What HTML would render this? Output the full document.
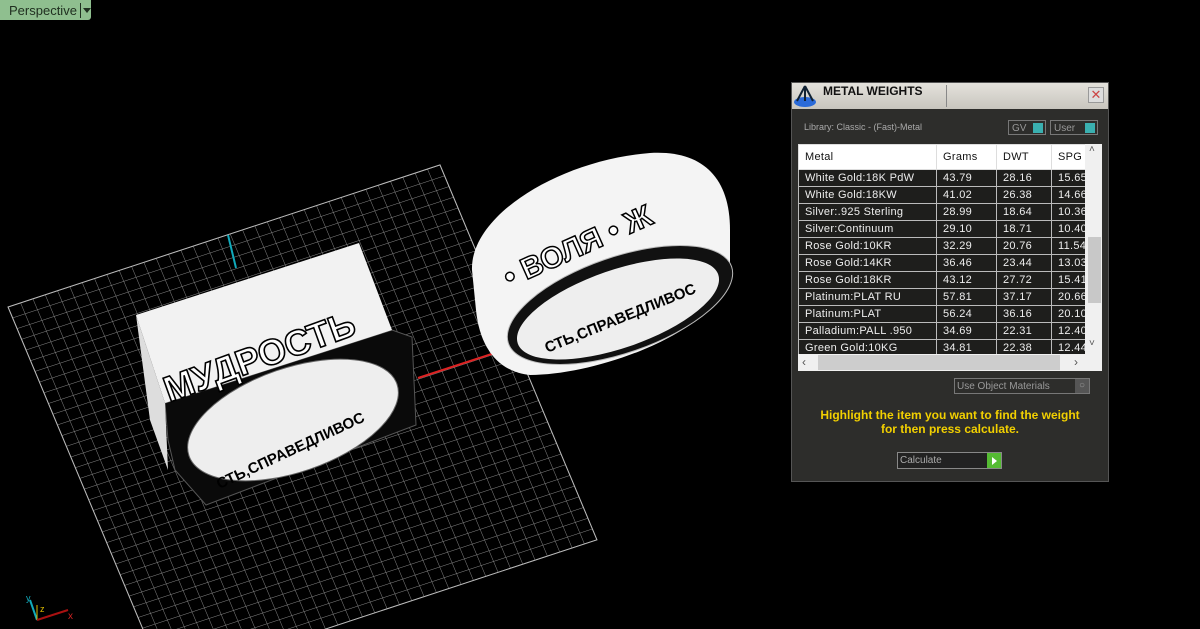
<!DOCTYPE html>
<html style="overflow:hidden"><head><meta charset="utf-8"><style>
html,body{margin:0;width:1200px;height:629px;overflow:hidden}
body{background:#000;position:relative;font-family:"Liberation Sans",sans-serif}
.vp{position:absolute;left:0;top:0;width:91px;height:20px;background:#8fbf8f;border-bottom-right-radius:3px}
.vp span{position:absolute;left:9px;top:3px;font-size:13px;color:#203020}
.vp i{position:absolute;left:80px;top:3px;width:1px;height:15px;background:#203020}
.vp b{position:absolute;left:83px;top:8px;border:4px solid transparent;border-top:5px solid #203020;border-bottom:0}
.pn{position:absolute;left:791px;top:82px;width:316px;height:398px;background:#2d2d2b;border:1px solid #555}
.tb{position:absolute;left:0;top:0;width:316px;height:26px;background:linear-gradient(#e4e2dc,#c8c5be);}
.tb .t{position:absolute;left:31px;top:1px;font-weight:bold;font-size:12px;color:#111}
.tb .sep{position:absolute;left:154px;top:2px;width:1px;height:22px;background:#888}
.tb .x{position:absolute;right:4px;top:4px;width:14px;height:14px;border:1px solid #999;background:#ddd;color:#c44;font-size:13px;line-height:13px;text-align:center}
.lib{position:absolute;left:12px;top:39px;font-size:9px;color:#aaa}
.tg{position:absolute;top:37px;height:15px;border:1px solid #777;font-size:10px;color:#999;line-height:15px;padding-left:3px;box-sizing:border-box}
.tg i{position:absolute;right:2px;top:2px;width:10px;height:10px;background:#3ab0b0}
.tbl{position:absolute;left:6px;top:61px;width:304px;height:227px;background:#fff;overflow:hidden}
table{position:absolute;left:0;top:0;border-collapse:collapse;font-size:11px;letter-spacing:.3px}
td{height:16px;padding:0 0 0 6px;border:1px solid #bbb;color:#eee;background:#1e1e1c;white-space:nowrap;overflow:hidden}
tr.h td{height:24px;background:#fff;color:#111;border-color:#ddd}
.vs{position:absolute;right:0;top:0;width:17px;height:210px;background:#f0f0f0}
.hs{position:absolute;left:0;top:210px;width:304px;height:17px;background:#f0f0f0}
.y{position:absolute;left:0;width:316px;text-align:center;color:#f2d000;font-weight:bold;font-size:12px}
</style></head><body>
<svg width="1200" height="629" style="position:absolute;left:0;top:0">
<defs><pattern id="g" width="13.7" height="13.7" patternUnits="userSpaceOnUse"><path d="M0 0H13.7M0 0V13.7" stroke="#8a8a8a" stroke-width="1" vector-effect="non-scaling-stroke" fill="none"/></pattern></defs>
<g transform="matrix(0.9,-0.296,0.327,0.781,8,307)">
<rect width="480" height="480" fill="url(#g)"/>
<rect width="480" height="480" fill="none" stroke="#bbb" vector-effect="non-scaling-stroke"/>
</g>
<line x1="228" y1="235" x2="236" y2="268" stroke="#1ab" stroke-width="2"/>
<line x1="418" y1="378" x2="504" y2="350" stroke="#d22" stroke-width="2"/>
<!-- right ring -->
<path d="M472,270 C470,215 560,160 650,153 C700,150 730,175 730,230 L730,275 C720,330 600,375 530,375 C500,372 480,350 476,310 Z" fill="#f4f4f4"/>
<ellipse cx="620" cy="305" rx="118" ry="48" transform="rotate(-19 620 305)" fill="#111" stroke="#bbb"/>
<ellipse cx="618" cy="309" rx="106" ry="39" transform="rotate(-19 618 309)" fill="#eee"/>
<text x="490" y="262" font-size="30" font-weight="bold" fill="#fff" stroke="#000" stroke-width="1.5" transform="rotate(-24 560 230)" font-family="Liberation Sans,DejaVu Sans,sans-serif">• ВОЛЯ • Ж</text>
<text x="535" y="330" font-size="15" font-weight="bold" fill="#000" transform="rotate(-22 600 310)" font-family="Liberation Sans,DejaVu Sans,sans-serif">СТЬ,СПРАВЕДЛИВОС</text>
<!-- left ring -->
<path d="M165,403 L392,330 L412,337 L416,425 L206,505 L175,470 L168,440 Z" fill="#0a0a0a" stroke="#555"/>
<path d="M136,315 L359,243 L392,330 L165,403 Z" fill="#f2f2f2"/>
<path d="M136,315 L165,403 L168,470 L150,420 Z" fill="#ddd"/>
<ellipse cx="293" cy="420" rx="110" ry="52" transform="rotate(-19 293 420)" fill="#eee" stroke="#666"/>
<text x="150" y="367" font-size="36" font-weight="bold" fill="#fff" stroke="#000" stroke-width="1.6" transform="rotate(-20 260 330)" font-family="Liberation Sans,DejaVu Sans,sans-serif">МУДРОСТЬ</text>
<text x="200" y="458" font-size="15" font-weight="bold" fill="#000" transform="rotate(-25 280 430)" font-family="Liberation Sans,DejaVu Sans,sans-serif">СТЬ,СПРАВЕДЛИВОС</text>
<!-- axis -->
<line x1="37" y1="620" x2="30" y2="600" stroke="#1ab" stroke-width="2"/>
<line x1="37" y1="620" x2="37" y2="605" stroke="#db0" stroke-width="1"/>
<line x1="37" y1="620" x2="68" y2="610" stroke="#a11" stroke-width="2"/>
<text x="40" y="612" font-size="9" fill="#db0">z</text>
<text x="68" y="619" font-size="10" fill="#c22">x</text>
<text x="26" y="601" font-size="9" fill="#1ab">y</text>
</svg>
<div class="vp"><span>Perspective</span><i></i><b></b></div>
<div class="pn">
 <div class="tb"><svg width="28" height="26" style="position:absolute;left:0;top:0"><ellipse cx="13" cy="19" rx="11" ry="5" fill="#2a6ad8"/><path d="M13 3 L5 18 M13 3 L21 18 M13 3 V18" stroke="#123" stroke-width="2"/></svg><span class="t">METAL WEIGHTS</span><span class="sep"></span><div class="x">✕</div></div>
 <div class="lib">Library: Classic - (Fast)-Metal</div>
 <div class="tg" style="left:216px;width:38px">GV<i></i></div>
 <div class="tg" style="left:258px;width:48px">User<i></i></div>
 <div class="tbl">
  <table>
   <tr class="h"><td style="width:131px">Metal</td><td style="width:53px">Grams</td><td style="width:48px">DWT</td><td style="width:31px">SPG</td></tr>
   <tr><td>White Gold:18K PdW</td><td>43.79</td><td>28.16</td><td>15.65</td></tr>
   <tr><td>White Gold:18KW</td><td>41.02</td><td>26.38</td><td>14.66</td></tr>
   <tr><td>Silver:.925 Sterling</td><td>28.99</td><td>18.64</td><td>10.36</td></tr>
   <tr><td>Silver:Continuum</td><td>29.10</td><td>18.71</td><td>10.40</td></tr>
   <tr><td>Rose Gold:10KR</td><td>32.29</td><td>20.76</td><td>11.54</td></tr>
   <tr><td>Rose Gold:14KR</td><td>36.46</td><td>23.44</td><td>13.03</td></tr>
   <tr><td>Rose Gold:18KR</td><td>43.12</td><td>27.72</td><td>15.41</td></tr>
   <tr><td>Platinum:PLAT RU</td><td>57.81</td><td>37.17</td><td>20.66</td></tr>
   <tr><td>Platinum:PLAT</td><td>56.24</td><td>36.16</td><td>20.10</td></tr>
   <tr><td>Palladium:PALL .950</td><td>34.69</td><td>22.31</td><td>12.40</td></tr>
   <tr><td>Green Gold:10KG</td><td>34.81</td><td>22.38</td><td>12.44</td></tr>
  </table>
  <div class="vs"><div style="position:absolute;left:3px;top:93px;width:13px;height:66px;background:#c8c8c8"></div><span style="position:absolute;left:4px;top:0;font-size:10px;color:#555">˄</span><span style="position:absolute;left:4px;top:194px;font-size:10px;color:#555">˅</span></div>
  <div class="hs"><div style="position:absolute;left:20px;top:1px;width:242px;height:15px;background:#cdcdcd"></div><span style="position:absolute;left:4px;top:1px;font-size:12px;color:#555">‹</span><span style="position:absolute;left:276px;top:1px;font-size:12px;color:#555">›</span></div>
 </div>
 <div style="position:absolute;left:162px;top:295px;width:136px;height:16px;border:1px solid #777;font-size:10px;color:#999;line-height:16px;padding-left:2px;box-sizing:border-box">Use Object Materials<span style="position:absolute;right:0;top:0;width:14px;height:14px;background:#555;color:#999;text-align:center;line-height:14px">○</span></div>
 <div class="y" style="top:325px">Highlight the item you want to find the weight</div>
 <div class="y" style="top:339px">for then press calculate.</div>
 <div style="position:absolute;left:105px;top:369px;width:105px;height:17px;border:1px solid #888;font-size:10px;color:#aaa;line-height:16px;padding-left:2px;box-sizing:border-box;background:#222">Calculate<span style="position:absolute;right:0;top:0;width:14px;height:15px;background:#5b3"></span><span style="position:absolute;right:4px;top:4px;border:4px solid transparent;border-left:5px solid #fff;border-right:0"></span></div>
</div>
</body></html>
